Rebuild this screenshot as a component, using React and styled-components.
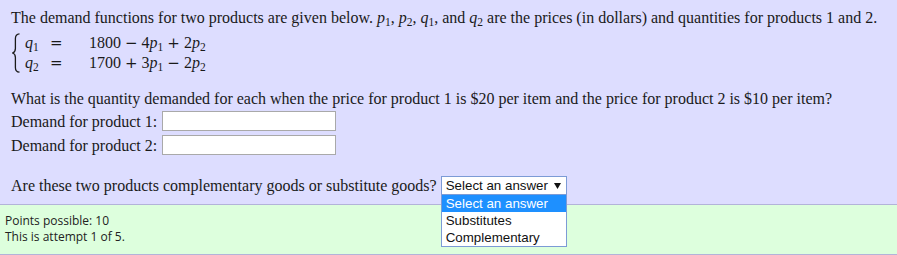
import React from "react";
import styled, { createGlobalStyle } from "styled-components";

const GlobalStyle = createGlobalStyle`
  html, body {
    margin: 0;
    padding: 0;
    background: #ffffff;
  }
`;

const Page = styled.div`
  width: 897px;
`;

const QuestionBox = styled.div`
  background: #ddddff;
  padding: 8px 11px 9px;
  font-family: "Liberation Serif", "Times New Roman", serif;
  font-size: 16px;
  line-height: 19px;
  color: #1a1a1a;
  border-bottom: 1px solid #b3b3d9;
`;

const Para = styled.div`
  margin-top: ${(p) => p.$top || 0}px;
  white-space: nowrap;
`;

const Var = styled.i`
  font-family: "Liberation Serif", "Times New Roman", serif;
  font-style: italic;
`;

const Sub = styled.sub`
  font-size: 11.5px;
  line-height: 0;
  vertical-align: -3px;
  font-style: normal;
`;

const Op = styled.span`
  font-family: "DejaVu Serif", serif;
  font-size: 15px;
  margin: 0 ${(p) => (p.$wide ? 0 : 4)}px;
`;

const Equations = styled.div`
  display: grid;
  grid-template-columns: 14px 25px 39px auto;
  grid-template-rows: 20px 20px;
  line-height: 20px;
  margin-top: 6px;
`;

const BraceCell = styled.div`
  grid-row: 1 / span 2;
  grid-column: 1;
  display: flex;
  align-items: center;
  padding-left: 1px;
`;

const FieldRow = styled.div`
  display: flex;
  align-items: center;
  gap: 5px;
  height: 24px;
  margin-top: ${(p) => p.$top || 0}px;
`;

const TextInput = styled.input`
  box-sizing: border-box;
  width: 174px;
  height: 20px;
  border: 1px solid #a9a9a9;
  background: #ffffff;
  margin: 0;
  padding: 0 3px;
  font-family: "Liberation Sans", Arial, sans-serif;
  font-size: 13px;
  outline: none;
`;

const SelectRow = styled.div`
  display: flex;
  align-items: center;
  gap: 4px;
  margin-top: 19px;
  height: 19px;
`;

const SelectWrap = styled.div`
  position: relative;
`;

const SelectBox = styled.div`
  box-sizing: border-box;
  width: 126px;
  height: 19px;
  border: 1px solid #7c9bd6;
  background: #ffffff;
  display: flex;
  align-items: center;
  justify-content: space-between;
  padding: 0 5px 0 4px;
  font-family: "Liberation Sans", Arial, sans-serif;
  font-size: 13.33px;
  color: #111;
  line-height: 17px;
`;

const Dropdown = styled.ul`
  position: absolute;
  top: 100%;
  left: 0;
  box-sizing: border-box;
  width: 126px;
  margin: 0;
  padding: 0;
  list-style: none;
  background: #ffffff;
  border: 1px solid #7c9bd6;
  border-top: none;
  z-index: 2;
`;

const Option = styled.li`
  height: 17px;
  line-height: 17px;
  padding: 0 4px;
  font-family: "Liberation Sans", Arial, sans-serif;
  font-size: 13.33px;
  color: ${(p) => (p.$active ? "#ffffff" : "#111111")};
  background: ${(p) => (p.$active ? "#1e90ff" : "transparent")};
`;

const Footer = styled.div`
  background: #ddffdd;
  border-bottom: 1px solid #b3b3d9;
  padding: 8px 5px 9px;
  font-family: "Open Sans", "DejaVu Sans", sans-serif;
  font-size: 12px;
  line-height: 16px;
  color: #222;
`;

const Brace = () => (
  <svg width="8" height="40" viewBox="0 0 8 40">
    <path
      d="M7.5 0.8 C4.6 1 3.4 2.6 3.4 5.5 L3.4 15.5 C3.4 18 2.4 19.4 0.6 20 C2.4 20.6 3.4 22 3.4 24.5 L3.4 34.5 C3.4 37.4 4.6 39 7.5 39.2"
      fill="none"
      stroke="#1a1a1a"
      strokeWidth="1.3"
    />
  </svg>
);

const Arrow = () => (
  <svg width="7" height="6" viewBox="0 0 7 6">
    <path d="M0 0 L7 0 L3.5 6 Z" fill="#111" />
  </svg>
);

const P = ({ n }) => (
  <>
    <Var>p</Var>
    <Sub>{n}</Sub>
  </>
);

const Q = ({ n }) => (
  <>
    <Var>q</Var>
    <Sub>{n}</Sub>
  </>
);

const App = () => {
  return (
    <Page>
      <GlobalStyle />
      <QuestionBox>
        <Para>
          The demand functions for two products are given below. <P n="1" />,{" "}
          <P n="2" />, <Q n="1" />, and <Q n="2" /> are the prices (in dollars)
          and quantities for products 1 and 2.
        </Para>
        <Equations>
          <BraceCell>
            <Brace />
          </BraceCell>
          <div>
            <Q n="1" />
          </div>
          <div>
            <Op $wide>=</Op>
          </div>
          <div>
            1800<Op>−</Op>4<P n="1" />
            <Op>+</Op>2<P n="2" />
          </div>
          <div>
            <Q n="2" />
          </div>
          <div>
            <Op $wide>=</Op>
          </div>
          <div>
            1700<Op>+</Op>3<P n="1" />
            <Op>−</Op>2<P n="2" />
          </div>
        </Equations>
        <Para $top={16}>
          What is the quantity demanded for each when the price for product 1 is
          $20 per item and the price for product 2 is $10 per item?
        </Para>
        <FieldRow $top={1}>
          <span>Demand for product 1:</span>
          <TextInput type="text" />
        </FieldRow>
        <FieldRow>
          <span>Demand for product 2:</span>
          <TextInput type="text" />
        </FieldRow>
        <SelectRow>
          <span>Are these two products complementary goods or substitute goods?</span>
          <SelectWrap>
            <SelectBox>
              <span>Select an answer</span>
              <Arrow />
            </SelectBox>
            <Dropdown>
              <Option $active>Select an answer</Option>
              <Option>Substitutes</Option>
              <Option>Complementary</Option>
            </Dropdown>
          </SelectWrap>
        </SelectRow>
      </QuestionBox>
      <Footer>
        <div>Points possible: 10</div>
        <div>This is attempt 1 of 5.</div>
      </Footer>
    </Page>
  );
};

export default App;
